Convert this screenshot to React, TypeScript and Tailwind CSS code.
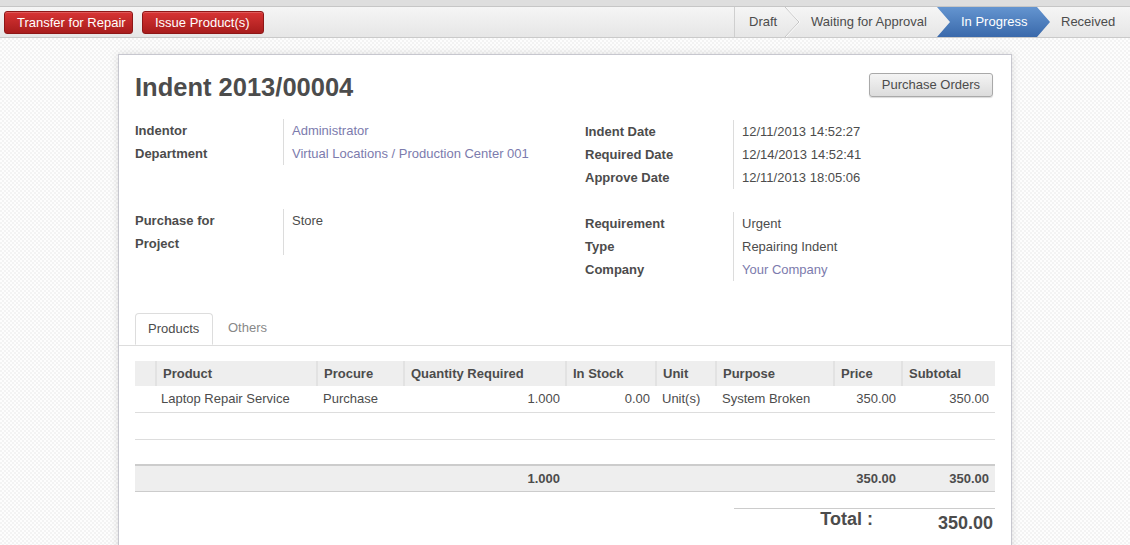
import type { ReactNode } from "react";

const LINK = "text-[#7c7bad]";

type Field = { label: string; value: string; link?: boolean };

const groupA: Field[] = [
  { label: "Indentor", value: "Administrator", link: true },
  { label: "Department", value: "Virtual Locations / Production Center 001", link: true },
];
const groupB: Field[] = [
  { label: "Indent Date", value: "12/11/2013 14:52:27" },
  { label: "Required Date", value: "12/14/2013 14:52:41" },
  { label: "Approve Date", value: "12/11/2013 18:05:06" },
];
const groupC: Field[] = [
  { label: "Purchase for", value: "Store" },
  { label: "Project", value: "" },
];
const groupD: Field[] = [
  { label: "Requirement", value: "Urgent" },
  { label: "Type", value: "Repairing Indent" },
  { label: "Company", value: "Your Company", link: true },
];

function FieldGroup({ fields, className = "" }: { fields: Field[]; className?: string }) {
  return (
    <div className={`grid grid-cols-[148px_1fr] ${className}`}>
      <div>
        {fields.map((f) => (
          <div key={f.label} className="h-[23px] leading-[23px] font-bold">
            {f.label}
          </div>
        ))}
      </div>
      <div className="border-l border-[#dcdcdc] pl-[8px]">
        {fields.map((f) => (
          <div key={f.label} className={`h-[23px] leading-[23px] ${f.link ? LINK : ""}`}>
            {f.value}
          </div>
        ))}
      </div>
    </div>
  );
}

function RedButton({ children, width }: { children: ReactNode; width: string }) {
  return (
    <button
      className={`h-[23px] ${width} rounded-[3px] border border-[#8e1717] bg-gradient-to-b from-[#d83434] to-[#a81c1c] pl-[12px] text-left text-[13px] leading-[21px] text-white shadow-[inset_0_1px_0_rgba(255,255,255,0.2)]`}
    >
      {children}
    </button>
  );
}

function StatusSteps() {
  return (
    <div className="flex h-full items-stretch text-[13px]">
      <div className="flex w-[51px] items-center border-l border-[#cfcfcf] pl-[14px]">Draft</div>
      <svg width="16" height="30" viewBox="0 0 16 30" className="shrink-0">
        <polyline points="0,0 14,15 0,30" fill="none" stroke="#c4c4c4" strokeWidth="1" />
        <polyline points="1,0 15,15 1,30" fill="none" stroke="#fafafa" strokeWidth="1" />
      </svg>
      <div className="flex w-[136px] items-center pl-[10px]">Waiting for Approval</div>
      <div className="flex w-[113px] items-center bg-gradient-to-b from-[#6495d0] to-[#3a69ab] pl-[24px] text-white [clip-path:polygon(0_0,100px_0,113px_50%,100px_100%,0_100%,13px_50%)]">
        In Progress
      </div>
      <div className="flex w-[80px] items-center pl-[11px]">Received</div>
    </div>
  );
}

const cols = [21, 161, 87, 162, 90, 60, 118, 68, 93];
const heads = ["", "Product", "Procure", "Quantity Required", "In Stock", "Unit", "Purpose", "Price", "Subtotal"];

function ProductsTable() {
  return (
    <table className="w-[860px] table-fixed border-collapse text-[13px]">
      <colgroup>
        {cols.map((w, i) => (
          <col key={i} style={{ width: w }} />
        ))}
      </colgroup>
      <thead>
        <tr className="h-[25px] bg-[#eeeeee]">
          {heads.map((h, i) => (
            <th
              key={i}
              className={`px-[6px] text-left font-bold ${i > 0 ? "border-l-2 border-[#e2e2e2]" : ""}`}
            >
              {h}
            </th>
          ))}
        </tr>
      </thead>
      <tbody>
        <tr className="h-[26px] border-b border-[#dddddd]">
          <td />
          <td className="px-[5px]">Laptop Repair Service</td>
          <td className="px-[6px]">Purchase</td>
          <td className="px-[6px] text-right">1.000</td>
          <td className="px-[6px] text-right">0.00</td>
          <td className="px-[6px]">Unit(s)</td>
          <td className="px-[6px]">System Broken</td>
          <td className="px-[6px] text-right">350.00</td>
          <td className="px-[6px] text-right">350.00</td>
        </tr>
        <tr className="h-[27px] border-b border-[#dddddd]">
          <td colSpan={9} />
        </tr>
        <tr className="h-[26px]">
          <td colSpan={9} />
        </tr>
      </tbody>
      <tfoot>
        <tr className="h-[26px] border-t-2 border-b border-[#cccccc] bg-[#eeeeee] font-bold">
          <td colSpan={3} />
          <td className="px-[6px] text-right">1.000</td>
          <td colSpan={3} />
          <td className="px-[6px] text-right">350.00</td>
          <td className="px-[6px] text-right">350.00</td>
        </tr>
      </tfoot>
    </table>
  );
}

export default function App() {
  return (
    <div className="min-h-screen bg-[repeating-conic-gradient(#f3f3f3_0_25%,#fdfdfd_0_50%)] bg-[length:4px_4px] font-['Liberation_Sans',Arial,sans-serif] text-[13px] text-[#4c4c4c]">
      <div className="h-[7px] border-b border-[#c6c6c6] bg-[#dedede]" />
      <div className="flex h-[31px] items-stretch justify-between border-b border-[#cacaca] bg-gradient-to-b from-[#f5f5f5] to-[#e6e6e6]">
        <div className="flex items-center gap-[9px] pl-[4px]">
          <RedButton width="w-[129px]">Transfer for Repair</RedButton>
          <RedButton width="w-[122px]">Issue Product(s)</RedButton>
        </div>
        <StatusSteps />
      </div>

      <div className="mx-auto mt-[16px] w-[894px] border border-[#c7c7cf] bg-white px-[16px] pb-[20px] pt-[17px] shadow-[0_0_8px_rgba(0,0,0,0.12)]">
        <div className="flex items-start justify-between">
          <h1 className="-mt-[2px] text-[25.5px] font-bold leading-[34px] text-[#4c4c4c]">Indent 2013/00004</h1>
          <button className="mr-[2px] mt-[1px] h-[24px] rounded-[3px] border border-[#a9a9a9] bg-gradient-to-b from-[#f4f4f4] to-[#dcdcdc] px-[12px] text-[13px] leading-[22px] text-[#4c4c4c] shadow-[0_1px_1px_rgba(0,0,0,0.15)]">
            Purchase Orders
          </button>
        </div>

        <div className="mt-[15px] grid grid-cols-[450px_1fr] items-start">
          <FieldGroup fields={groupA} />
          <FieldGroup fields={groupB} className="mt-[1px]" />
        </div>
        <div className="mt-[20px] grid grid-cols-[450px_1fr] items-start">
          <FieldGroup fields={groupC} />
          <FieldGroup fields={groupD} className="mt-[3px]" />
        </div>

        <div className="-mx-[16px] mt-[32px] flex border-b border-[#dddddd] px-[16px]">
          <div className="-mb-px h-[32px] w-[78px] rounded-t-[4px] border border-b-white border-[#dddddd] bg-white pl-[12px] leading-[30px]">
            Products
          </div>
          <div className="h-[32px] pl-[15px] leading-[30px] text-[#888888]">Others</div>
        </div>

        <div className="mt-[15px]">
          <ProductsTable />
        </div>

        <div className="mt-[16px] flex justify-end">
          <div className="flex w-[261px] border-t border-[#cccccc] font-bold">
            <div className="w-[139px] pt-[1px] text-right text-[18px] leading-[18px]">Total :</div>
            <div className="flex-1 pr-[2px] pt-[5px] text-right text-[18px] leading-[18px]">350.00</div>
          </div>
        </div>
      </div>
    </div>
  );
}
